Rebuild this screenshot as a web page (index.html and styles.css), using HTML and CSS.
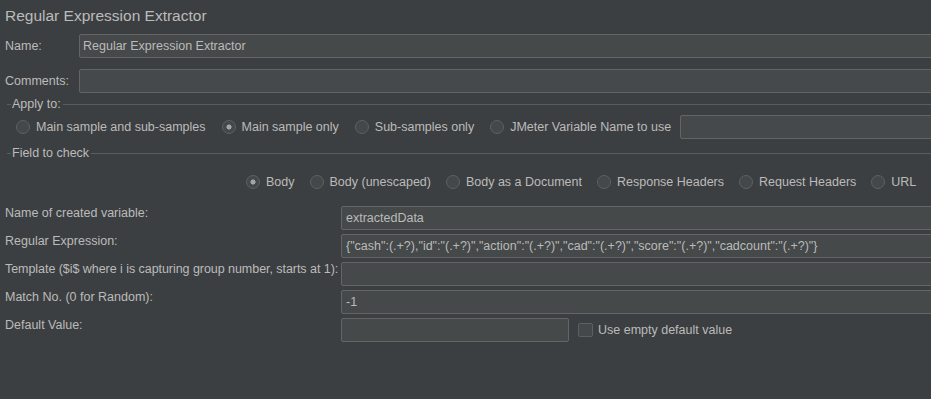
FILE: index.html
```html
<!DOCTYPE html>
<html lang="en">
<head>
  <meta charset="UTF-8">
  <title>Regular Expression Extractor</title>
  <link rel="stylesheet" href="styles.css">
</head>
<body>
  <div class="panel">
    <h2 class="title">Regular Expression Extractor</h2>

    <div class="field-row first">
      <label>Name:</label>
      <input type="text" value="Regular Expression Extractor">
    </div>
    <div class="field-row">
      <label>Comments:</label>
      <input type="text" value="">
    </div>

    <div class="group-title apply">Apply to:</div>
    <div class="radio-row apply-row">
      <label class="opt"><input type="radio" name="scope"> Main sample and sub-samples</label>
      <label class="opt"><input type="radio" name="scope" checked> Main sample only</label>
      <label class="opt"><input type="radio" name="scope"> Sub-samples only</label>
      <label class="opt"><input type="radio" name="scope"> JMeter Variable Name to use</label>
      <input type="text" class="var-input" value="">
    </div>

    <div class="group-title check">Field to check</div>
    <div class="radio-row check-row">
      <label class="opt"><input type="radio" name="field" checked> Body</label>
      <label class="opt"><input type="radio" name="field"> Body (unescaped)</label>
      <label class="opt"><input type="radio" name="field"> Body as a Document</label>
      <label class="opt"><input type="radio" name="field"> Response Headers</label>
      <label class="opt"><input type="radio" name="field"> Request Headers</label>
      <label class="opt"><input type="radio" name="field"> URL</label>
    </div>

    <div class="form-grid">
      <label>Name of created variable:</label>
      <input type="text" value="extractedData">

      <label>Regular Expression:</label>
      <input type="text" value='{"cash":(.+?),"id":"(.+?)","action":"(.+?)","cad":"(.+?)","score":"(.+?)","cadcount":"(.+?)"}'>

      <label class="tight">Template ($i$ where i is capturing group number, starts at 1):</label>
      <input type="text" value="">

      <label>Match No. (0 for Random):</label>
      <input type="text" value="-1">

      <label>Default Value:</label>
      <div class="default-row">
        <input type="text" class="short" value="">
        <label class="check-opt"><input type="checkbox"> Use empty default value</label>
      </div>
    </div>
  </div>
</body>
</html>
```

FILE: styles.css
```css
html, body {
  margin: 0;
  background: #3c3f41;
  overflow: hidden;
}
body {
  font-family: 'Liberation Sans', Arial, sans-serif;
  font-size: 12.5px;
  color: #bbbbbb;
}
.panel {
  width: 960px;
}
.title {
  margin: 0;
  padding: 6px 5px 0;
  font-size: 15.5px;
  font-weight: normal;
  line-height: 20px;
  color: #bbbbbb;
}
input[type=text] {
  box-sizing: border-box;
  height: 24px;
  margin: 0;
  padding: 0 4px;
  background: #45494a;
  border: 1px solid #646464;
  border-radius: 2px;
  color: #bbbbbb;
  font-family: inherit;
  font-size: 12.5px;
  outline: none;
}
.field-row {
  display: flex;
  align-items: center;
  margin-top: 11px;
  padding-left: 5px;
}
.field-row.first { margin-top: 8px; }
.field-row label { width: 74px; flex: none; }
.field-row input { flex: 1; padding-left: 3px; }

.group-title {
  display: flex;
  align-items: center;
  height: 14px;
  padding-left: 7px;
}
.group-title::before {
  content: "";
  width: 4px;
  height: 1px;
  margin-right: 1px;
  background: #5a5d5f;
}
.group-title::after {
  content: "";
  flex: 1;
  height: 1px;
  margin-left: 2px;
  background: #5a5d5f;
}
.apply { margin-top: 4px; }
.check { margin-top: 7px; }

.radio-row {
  display: flex;
  align-items: center;
  height: 24px;
}
.apply-row { margin-top: 4px; padding-left: 16px; gap: 16px; }
.check-row { margin-top: 10px; padding-left: 246px; gap: 15px; }
.opt, .check-opt {
  display: flex;
  align-items: center;
  gap: 6px;
  white-space: nowrap;
}
input[type=radio] {
  appearance: none;
  box-sizing: border-box;
  width: 14px;
  height: 14px;
  margin: 0;
  border: 1px solid #5e6060;
  border-radius: 50%;
  background: #43494a;
}
input[type=radio]:checked {
  background: radial-gradient(circle, #a4a4a4 0 2.3px, #43494a 2.8px);
}
.radio-row .var-input { flex: 1; margin-left: -7px; }

.form-grid {
  display: grid;
  grid-template-columns: 336px 1fr;
  row-gap: 4px;
  margin-top: 12px;
  padding-left: 5px;
}
.form-grid > label {
  align-self: start;
  line-height: 14px;
  white-space: nowrap;
}
.form-grid > .tight { letter-spacing: -0.05px; }
.default-row {
  display: flex;
  align-items: center;
}
.default-row .short { width: 228px; }
.check-opt { margin-left: 9px; gap: 5px; }
input[type=checkbox] {
  appearance: none;
  box-sizing: border-box;
  width: 15px;
  height: 14px;
  margin: 0;
  border: 1px solid #5e6060;
  border-radius: 2px;
  background: #43494a;
}
```
